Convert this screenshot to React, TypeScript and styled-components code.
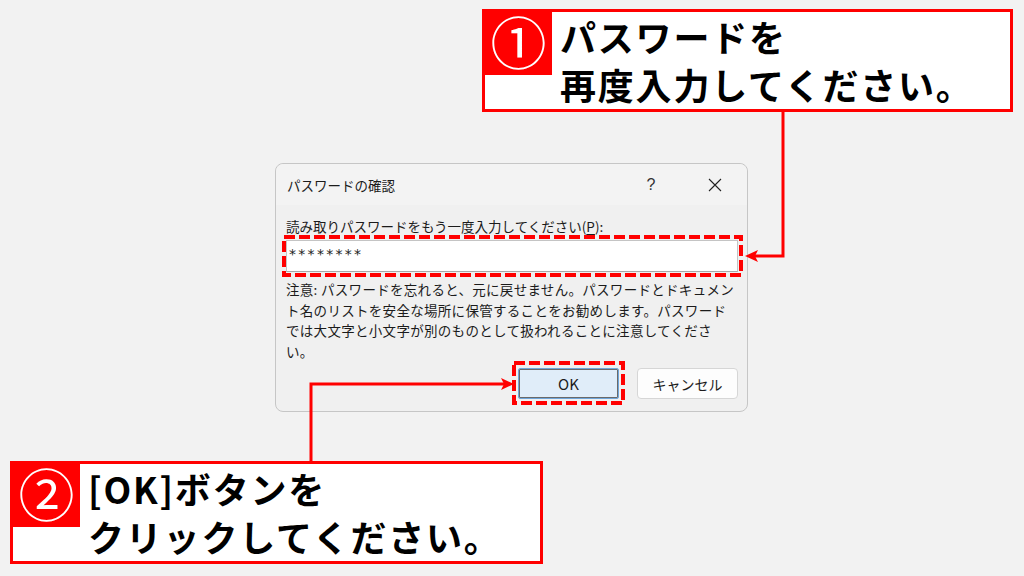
import React from "react";
import styled, { createGlobalStyle } from "styled-components";

const RED = "#ff0000";

const Global = createGlobalStyle`
  html, body { margin: 0; padding: 0; background: #f2f2f2; }
  body { font-family: "Noto Sans CJK JP", "Noto Sans", sans-serif; }
`;

const Stage = styled.div`
  position: relative;
  width: 1024px;
  height: 576px;
  overflow: hidden;
  background: #f2f2f2;
`;

const Window = styled.section`
  position: absolute;
  left: 275px;
  top: 163px;
  width: 473px;
  height: 249px;
  box-sizing: border-box;
  border: 1px solid #c6c6c6;
  border-radius: 8px;
  background: #f0f0f0;
  display: flex;
  flex-direction: column;
  font-family: "Noto Sans CJK JP", sans-serif;
  font-size: 13.5px;
  color: #1b1b1b;
`;

const TitleBar = styled.header`
  height: 41px;
  display: flex;
  align-items: center;
  padding-left: 11px;
  background: #f3f3f3;
  border-radius: 8px 8px 0 0;
`;

const Title = styled.span`
  flex: 1;
`;

const CaptionButton = styled.span`
  width: 64px;
  height: 100%;
  display: flex;
  align-items: center;
  justify-content: center;
  font-family: "Liberation Sans", sans-serif;
  font-size: 16px;
  color: #333;
`;

const Body = styled.div`
  display: flex;
  flex-direction: column;
  padding: 11px 9px 0 10px;
`;

const Label = styled.div`
  line-height: 20px;
  white-space: nowrap;
`;

const Underline = styled.span`
  text-decoration: underline;
  text-underline-offset: 2px;
`;

const Highlight = styled.div<{ $mt: number }>`
  position: relative;
  margin-top: ${(p) => p.$mt}px;
`;

const InlineHighlight = styled.div`
  position: relative;
  display: flex;
`;

const FrameSvg = styled.svg<{ $l: number; $t: number }>`
  position: absolute;
  left: ${(p) => p.$l}px;
  top: ${(p) => p.$t}px;
  overflow: visible;
  pointer-events: none;
`;

const Input = styled.div`
  height: 32px;
  box-sizing: border-box;
  background: #ffffff;
  border: 1px solid #c4c4c4;
  border-bottom-color: #a8a8a8;
  padding: 4px 0 0 2px;
  font-family: "DejaVu Sans", sans-serif;
  font-size: 14px;
  letter-spacing: 2.3px;
  line-height: 18px;
  color: #222;
`;

const Note = styled.div`
  margin-top: 7px;
  line-height: 20.5px;
  letter-spacing: 0.3px;
`;

const NoteLine = styled.span`
  display: block;
  white-space: nowrap;
`;

const ButtonRow = styled.div`
  display: flex;
  justify-content: flex-end;
  gap: 18px;
  margin-top: 7px;
`;

const Button = styled.div<{ $primary?: boolean }>`
  width: 101px;
  height: 31px;
  box-sizing: border-box;
  display: flex;
  align-items: center;
  justify-content: center;
  font-size: ${(p) => (p.$primary ? "15px" : "14px")};
  border-radius: ${(p) => (p.$primary ? "2px" : "4px")};
  background: ${(p) => (p.$primary ? "#e0edf9" : "#fdfdfd")};
  border: 1px solid ${(p) => (p.$primary ? "#6fa6dc" : "#d6d6d6")};
  box-shadow: ${(p) => (p.$primary ? "inset 0 0 0 1px #6a6a6a" : "none")};
`;

const Callout = styled.div<{ $x: number; $y: number; $w: number }>`
  position: absolute;
  left: ${(p) => p.$x}px;
  top: ${(p) => p.$y}px;
  width: ${(p) => p.$w}px;
  height: 103px;
  box-sizing: border-box;
  border: 3px solid ${RED};
  background: #ffffff;
  display: flex;
  align-items: flex-start;
`;

const Badge = styled.div`
  width: 67px;
  height: 63px;
  flex: none;
  background: ${RED};
  color: #ffffff;
  display: flex;
  align-items: center;
  justify-content: center;
  padding-bottom: 8px;
  box-sizing: border-box;
  font-family: "Noto Sans CJK JP", sans-serif;
  font-size: 56px;
  font-weight: 400;
  line-height: 1;
`;

const CalloutText = styled.div`
  margin-left: 8px;
  font-family: "Noto Sans CJK JP", sans-serif;
  font-size: 36px;
  font-weight: 700;
  line-height: 48px;
  letter-spacing: 1.8px;
  color: #000000;
  white-space: nowrap;
`;

const CalloutLine = styled.span`
  display: block;
`;

const Connectors = styled.svg`
  position: absolute;
  left: 0;
  top: 0;
  pointer-events: none;
`;

function DashFrame({ w, h, l, t }: { w: number; h: number; l: number; t: number }) {
  return (
    <FrameSvg width={w} height={h} $l={l} $t={t}>
      <rect
        x={2}
        y={2}
        width={w - 4}
        height={h - 4}
        fill="none"
        stroke={RED}
        strokeWidth={4}
        strokeDasharray="11 4"
      />
    </FrameSvg>
  );
}

function CloseIcon() {
  return (
    <svg width="14" height="14" viewBox="0 0 14 14">
      <path d="M1 1 L13 13 M13 1 L1 13" stroke="#222" strokeWidth="1.1" fill="none" />
    </svg>
  );
}

export default function App() {
  return (
    <>
      <Global />
      <Stage>
        <Window>
          <TitleBar>
            <Title>パスワードの確認</Title>
            <CaptionButton>?</CaptionButton>
            <CaptionButton>
              <CloseIcon />
            </CaptionButton>
          </TitleBar>
          <Body>
            <Label>
              読み取りパスワードをもう一度入力してください(<Underline>P</Underline>):
            </Label>
            <Highlight $mt={4}>
              <Input>********</Input>
              <DashFrame w={461} h={42} l={-4} t={-5} />
            </Highlight>
            <Note>
              <NoteLine>注意: パスワードを忘れると、元に戻せません。パスワードとドキュメン</NoteLine>
              <NoteLine>ト名のリストを安全な場所に保管することをお勧めします。パスワード</NoteLine>
              <NoteLine>では大文字と小文字が別のものとして扱われることに注意してくださ</NoteLine>
              <NoteLine>い。</NoteLine>
            </Note>
            <ButtonRow>
              <InlineHighlight>
                <Button $primary>OK</Button>
                <DashFrame w={113} h={44} l={-6} t={-7} />
              </InlineHighlight>
              <Button>キャンセル</Button>
            </ButtonRow>
          </Body>
        </Window>

        <Connectors width={1024} height={576}>
          <path d="M783 111 V256 H750" fill="none" stroke={RED} strokeWidth={3} />
          <polygon points="745,256 758,250 755,256 758,262" fill={RED} />
          <path d="M311 462 V384 H509" fill="none" stroke={RED} strokeWidth={3} />
          <polygon points="514,384 501,378 504,384 501,390" fill={RED} />
        </Connectors>

        <Callout $x={482} $y={9} $w={531}>
          <Badge>①</Badge>
          <CalloutText>
            <CalloutLine>パスワードを</CalloutLine>
            <CalloutLine>再度入力してください。</CalloutLine>
          </CalloutText>
        </Callout>

        <Callout $x={10} $y={461} $w={533}>
          <Badge>②</Badge>
          <CalloutText>
            <CalloutLine>[OK]ボタンを</CalloutLine>
            <CalloutLine>クリックしてください。</CalloutLine>
          </CalloutText>
        </Callout>
      </Stage>
    </>
  );
}
